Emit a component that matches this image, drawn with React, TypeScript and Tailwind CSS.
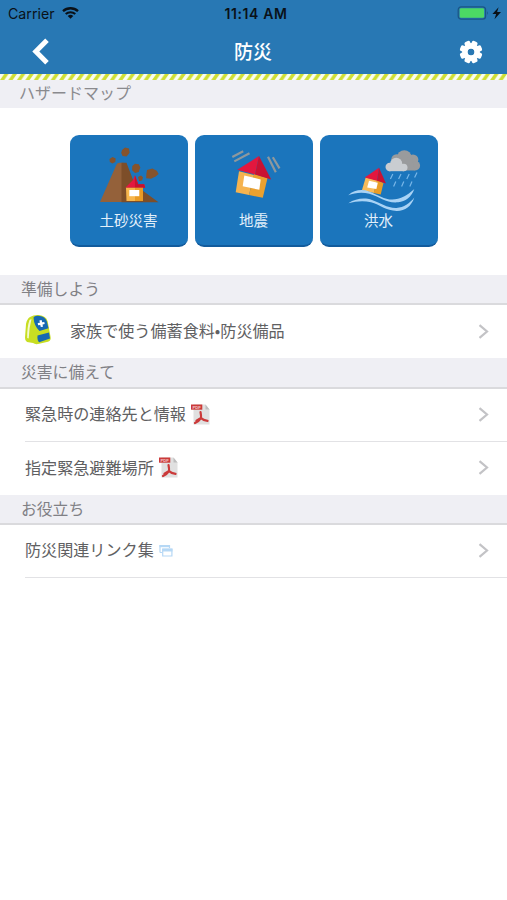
import type { ReactNode } from "react";

function WifiIcon() {
  return (
    <svg width="17" height="12" viewBox="0 0 17 12" className="shrink-0">
      <path d="M1 4.2a11 11 0 0 1 15 0" fill="none" stroke="#0a1118" strokeWidth="2.3" />
      <path d="M3.7 7.1a7 7 0 0 1 9.6 0" fill="none" stroke="#0a1118" strokeWidth="2" />
      <path d="M8.5 11.7 5.7 9a4 4 0 0 1 5.6 0z" fill="#0a1118" />
    </svg>
  );
}

function BatteryIcon() {
  return (
    <svg width="45" height="15" viewBox="0 0 45 15">
      <rect x="1.2" y="0.8" width="27.4" height="12.4" rx="3" fill="none" stroke="#1b5583" strokeWidth="1.2" />
      <rect x="2.7" y="2.2" width="24.4" height="9.6" rx="1.4" fill="#4cd964" />
      <path d="M30.2 5q1.8 2 0 4z" fill="#1b5583" />
      <path d="M41.6 1.2 35.4 8h3.7l-1.6 5.2 6.5-7.1h-3.9z" fill="#0a1118" />
    </svg>
  );
}

function GearIcon() {
  return (
    <svg width="24" height="24" viewBox="0 0 24 24">
      <g fill="#fff">
        {[22.5, 67.5, 112.5, 157.5, 202.5, 247.5, 292.5, 337.5].map((angle) => (
          <rect key={angle} x="9" y="0.6" width="6" height="8" rx="1.8" transform={`rotate(${angle} 12 12)`} />
        ))}
      </g>
      <circle cx="12" cy="12" r="6.2" fill="none" stroke="#fff" strokeWidth="5.4" />
    </svg>
  );
}

function LandslideIcon() {
  return (
    <svg width="118" height="76" viewBox="0 0 118 76">
      <path d="M30 67 46.5 29.5q1-2 3-1.8h4V67z" fill="#94613a" />
      <path d="M51.5 27.8h5L65 50l23.5 17.3h-37z" fill="#7d4e29" />
      <g fill="#85532c">
        <path d="m39.5 24 3-2 3.2 1.6-.4 3.4-3 1.5-2.4-1.6z" />
        <path d="m52 15 3-2.4 4 .8.6 4.4-3 3.8-4-.6-1.4-3z" />
        <path d="m62.3 31 2.7-2.2 3.8.4 1.5 3.3-1.6 4.4-3.6 1-3-2.6z" />
        <path d="m77 35 5.3-1.4 4.5 2.2 1.8 3.2-3 2.6-4.6 2.2-4.8-.6.2-4.5z" />
        <path d="m68 42 3-1.6 2 1.8-.8 3-3 1z" />
      </g>
      <path d="M55.3 52.7 63 45l2-4.8 1.8 5 1.4 4h6l1 3.5z" fill="#e3173e" />
      <path d="m64.9 40.2 1.9 5 1.4 4h6l1 3.5H65z" fill="#c5122f" />
      <path d="M56 52.7h9V66h-8.5z" fill="#f7b64d" />
      <path d="M65 52.7h8V66h-8z" fill="#e99b25" />
      <path d="M59.3 55h10v6.2h-10z" fill="#fff" />
    </svg>
  );
}

function EarthquakeIcon() {
  return (
    <svg width="118" height="76" viewBox="0 0 118 76">
      <g stroke="#8e989d" strokeWidth="2.2">
        <path d="m37.3 22 10.9-5.8M39.3 26.4l15.2-8.2M73 21.8l7.8 15.5M77.8 22.2l6.7 11.2" />
      </g>
      <path d="M44 36.2 59 40l-5 20-13.3-2.7z" fill="#f5b34f" />
      <path d="m59 39 13.5 4-4.7 19.8L54 60z" fill="#eba12f" />
      <path d="M64 21 42.3 34.8 60 39.5z" fill="#e3173e" />
      <path d="m64 21 12.2 23.5L60 39.5z" fill="#c91232" />
      <path d="m49.3 40.6 16.4 3.8-1.4 10.4-16.6-3.6z" fill="#fff" />
    </svg>
  );
}

function FloodIcon() {
  return (
    <svg width="118" height="76" viewBox="0 0 118 76">
      <g fill="#999b9d">
        <circle cx="84.3" cy="22.5" r="7.3" />
        <circle cx="76.5" cy="24.5" r="5.2" />
        <circle cx="93" cy="24.8" r="5.4" />
        <circle cx="95.3" cy="30.7" r="4.8" />
        <path d="M76 23h16l3 12.5H76z" />
      </g>
      <g fill="#c9cdd1">
        <circle cx="76.2" cy="28.8" r="6.1" />
        <circle cx="69.7" cy="32" r="4.2" />
        <circle cx="83.7" cy="32.5" r="3.8" />
        <path d="M69 30h15v6.2H69z" />
      </g>
      <g stroke="#79b7e8" strokeWidth="1.2">
        <path d="m72.8 39-2.4 5M81 39l-2.4 5M89.2 39l-2.4 5M97 37.5l-2.4 5M75.8 46.5l-2.2 5M83.8 46.5l-2.2 5M92 46.5l-2.2 5" />
      </g>
      <path d="m45.7 42.4 11.5 2.8-3.4 12.8-11.8-3z" fill="#f7bb5a" />
      <path d="m57 45 6.5 3-2.8 11.5-7-1.5z" fill="#e99d27" />
      <path d="M59 32.7 44.7 42.6 57 45.8z" fill="#e3173e" />
      <path d="m59 32.7 7 15.8-9-2.7z" fill="#c91232" />
      <path d="m49 45.7 8.8 2.1-1.4 6.2-9.2-1.6z" fill="#fff" />
      <g fill="#a9d3f5">
        <path d="M28.3 60.2C34 55 42 53.8 49 56.5c11 4.300 18 10.300 29 7.300 7-2 11.500-5.500 16.300-9.800-3 8.500-9 12.500-16 13.300-12 1.200-18-5.300-29-8.500-7-2-15-1-21 1.400z" />
        <path d="M28.3 68.3C36 63.2 45 62.5 52 65c9 3.200 15 8.200 24.500 7.900 7.500-.4 13-4.400 17.800-10.400-3 9-9 13.200-17.300 13.400C66 76 60 69.700 51 67.300c-7.500-2-15-1.200-22.700 1z" />
      </g>
    </svg>
  );
}

function BackpackIcon() {
  return (
    <svg width="28" height="31" viewBox="0 0 28 31">
      <path d="M6 3Q10 .6 15 1.100q7 .6 8.700 6.400l2.800 15q1 4-2.500 5.200L14 30q-3 .5-5-1l-6-1Q.8 27 1 23.500L2 10Q3 4.800 6 3z" fill="#c8de22" />
      <path d="M5.500 6Q3 13 3.200 24l1.500.5Q5 14 7.500 5z" fill="#f4fad0" />
      <path d="M9.500 3.500Q10.500 1.500 14 1.800q7 .5 8.800 5.400l1.700 7L15.500 17Q10 12 9.500 3.500z" fill="#1769b2" />
      <path d="m13.500 21.500 11.500-3 1 6-10.800 3.800q-2.200-1.500-1.700-6.800z" fill="#1769b2" />
      <path d="m15.400 6.500 2.200-.4.5 2.200 2.200-.4.400 2.200-2.200.4.500 2.200-2.200.4-.5-2.200-2.200.4-.4-2.200 2.200-.4z" fill="#fff" />
    </svg>
  );
}

function PdfIcon() {
  return (
    <svg width="19" height="21" viewBox="0 0 19 21">
      <path d="M2.500.5h12L18.500 5.500v15h-16z" fill="#e0e0e0" />
      <path d="m14.500.5 4 5h-4z" fill="#bdbdbd" />
      <path d="M0 .5h11.300v5.200H0z" fill="#cb3a3a" />
      <text x="1.500" y="4.700" fontSize="4.200" fontWeight="700" fill="#f3c9c9" fontFamily="Liberation Sans, sans-serif">PDF</text>
      <path d="M9.500 8q.8 4 .5 6-2.300 3.300-6 5M10 14q2 2.300 6.500 2.800M10 14l-4.500 2.800" fill="none" stroke="#cb3a3a" strokeWidth="2.200" strokeLinecap="round" />
    </svg>
  );
}

function WindowsIcon() {
  return (
    <svg width="14" height="13" viewBox="0 0 14 13">
      <path d="M1 8.500V1.500h9.500V4M1 8.500h2" fill="none" stroke="#b6d8f5" strokeWidth="1.200" />
      <path d="M.5 1H11v2.200H.5z" fill="#b6d8f5" />
      <path d="M3.700 5.200h9.200v6.800H3.700z" fill="#fff" stroke="#b6d8f5" strokeWidth="1.200" />
      <path d="M3.200 4.700h10.300v2.800H3.200z" fill="#b6d8f5" />
    </svg>
  );
}

function HazardCard({ label, children }: { label: string; children: ReactNode }) {
  return (
    <button className="flex h-28 w-[118px] flex-col items-center rounded-[9px] border-b-2 border-[#125b9c] bg-[#1b75bc]">
      {children}
      <span className="-mt-px text-[14.5px] leading-[19px] text-[#e3f0fa]">{label}</span>
    </button>
  );
}

function SectionHeader({ title }: { title: string }) {
  return (
    <h2 className="h-[30.25px] border-b-2 border-[#dadadd] bg-[#efeff4] pl-[21px] text-[15.8px] leading-[28.5px] text-[#808085]">
      {title}
    </h2>
  );
}

type ListRowProps = {
  title: string;
  leading?: ReactNode;
  trailing?: ReactNode;
  divider?: boolean;
};

function ListRow({ title, leading, trailing, divider }: ListRowProps) {
  return (
    <div className="pl-[25px]">
      <div className={`flex h-[53px] items-center pr-[18px] ${divider ? "border-b border-[#e2e2e5]" : ""}`}>
        {leading && <div className="-mt-[5px] -ml-px w-[46px]">{leading}</div>}
        <span className="-mt-[3px] text-[16.1px] leading-6 text-[#606062]">{title}</span>
        {trailing && <span className="-mt-px ml-[5px]">{trailing}</span>}
        <svg width="11" height="15" viewBox="0 0 11 15" className="-mt-px ml-auto">
          <path d="m1.500 1.200 7.500 6.300-7.500 6.300" fill="none" stroke="#c3c3c6" strokeWidth="2.200" />
        </svg>
      </div>
    </div>
  );
}

export default function App() {
  return (
    <div className="h-[900px] w-[507px] overflow-hidden bg-white font-['Noto_Sans_CJK_JP',sans-serif]">
      <header className="bg-[#2878b4]">
        <div className="grid h-[27px] grid-cols-3 items-center pr-[5px] pl-2 font-[Inter,sans-serif] text-[14.2px] text-[#0a1118]">
          <div className="flex items-center gap-[7px]">
            <span>Carrier</span>
            <WifiIcon />
          </div>
          <span className="pl-0.5 text-center text-[14px] font-semibold tracking-[0.6px]">11:14 AM</span>
          <div className="flex justify-end">
            <BatteryIcon />
          </div>
        </div>
        <div className="flex h-[47px] items-center justify-between pt-0.5 pr-6 pl-8">
          <svg width="17" height="27" viewBox="0 0 17 27">
            <path d="M15 2.2 3.8 13.5 15 24.8" fill="none" stroke="#fff" strokeWidth="5" />
          </svg>
          <h1 className="-ml-0.5 text-[19px] font-medium text-white">防災</h1>
          <GearIcon />
        </div>
        <svg width="507" height="6" className="block">
          <defs>
            <pattern id="stripes" width="8.45" height="6" patternUnits="userSpaceOnUse">
              <path d="M0 0h8.450v6H0z" fill="#fafdf0" />
              <path d="M4.200 0h4.250L4.250 6H0z" fill="#cedf35" />
            </pattern>
          </defs>
          <path d="M0 0h507v6H0z" fill="url(#stripes)" />
        </svg>
      </header>

      <h2 className="h-7 bg-[#efeff4] pl-[19px] text-[16px] leading-6 text-[#8a8a8e]">ハザードマップ</h2>
      <div className="flex h-[167px] justify-center gap-[7px] pt-[27px]">
        <HazardCard label="土砂災害">
          <LandslideIcon />
        </HazardCard>
        <HazardCard label="地震">
          <EarthquakeIcon />
        </HazardCard>
        <HazardCard label="洪水">
          <FloodIcon />
        </HazardCard>
      </div>

      <SectionHeader title="準備しよう" />
      <ListRow title="家族で使う備蓄食料•防災備品" leading={<BackpackIcon />} />
      <SectionHeader title="災害に備えて" />
      <ListRow title="緊急時の連絡先と情報" trailing={<PdfIcon />} divider />
      <ListRow title="指定緊急避難場所" trailing={<PdfIcon />} />
      <SectionHeader title="お役立ち" />
      <ListRow title="防災関連リンク集" trailing={<WindowsIcon />} divider />
    </div>
  );
}
